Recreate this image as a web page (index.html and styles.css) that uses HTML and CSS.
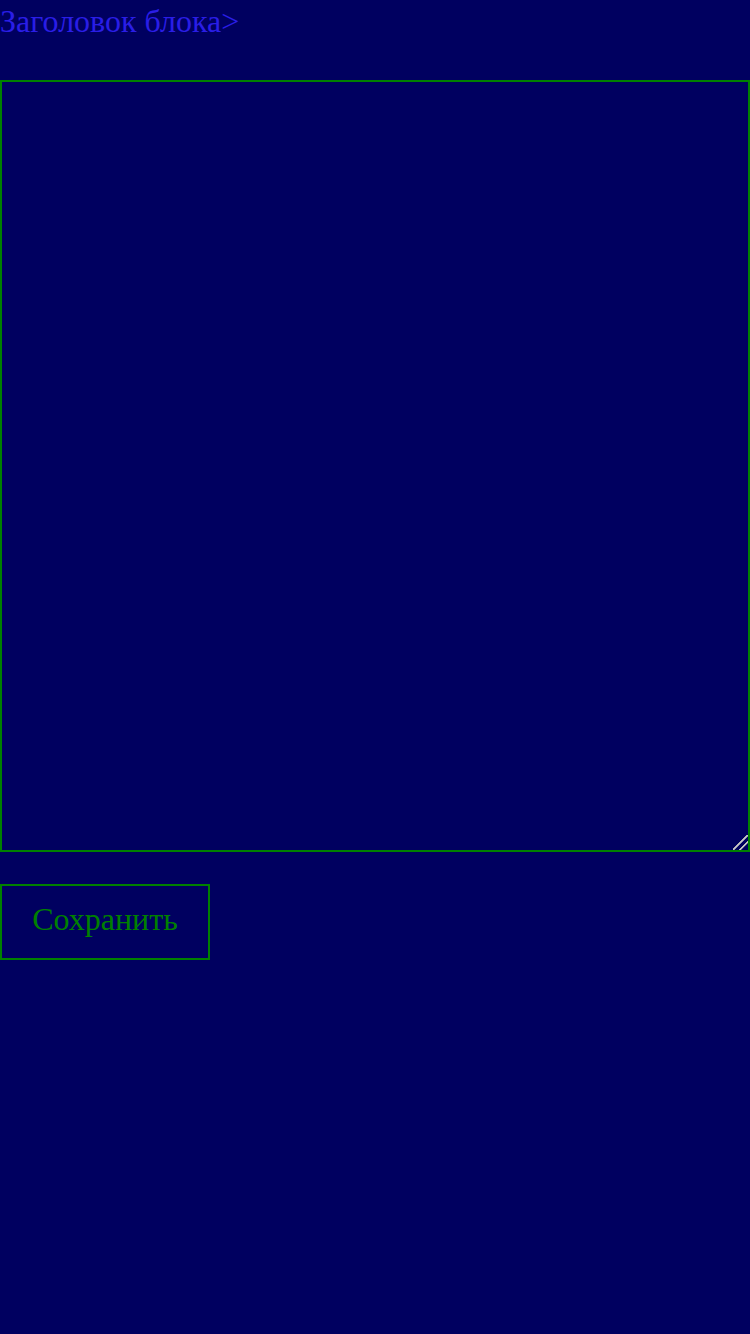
FILE: index.html
```html
<!DOCTYPE html>
<html lang="ru">
<head>
<meta charset="utf-8">
<link rel="stylesheet" href="styles.css">
</head>
<body>
<div class="block">
  <div class="block-title">Заголовок блока&gt;</div>
  <textarea class="block-text"></textarea>
  <button class="block-save" type="button">Сохранить</button>
</div>
</body>
</html>
```
FILE: styles.css
```css
html, body {
  margin: 0;
  padding: 0;
  background: #000060;
  height: 100%;
}
.block {
  display: flex;
  flex-direction: column;
  align-items: flex-start;
  font-family: "Liberation Serif", serif;
}
.block-title {
  font-size: 32px;
  line-height: 42px;
  color: #2a1ee6;
  height: 80px;
}
.block-text {
  box-sizing: border-box;
  width: 750px;
  height: 772px;
  margin: 0;
  background: #000060;
  border: 2px solid #008000;
  color: #008000;
  font-family: "Liberation Serif", serif;
  font-size: 32px;
  outline: none;
}
.block-text::-webkit-resizer {
  background: linear-gradient(135deg,
    transparent 0%, transparent 45%,
    #b0b0b0 46%, #d8d8d8 53%, transparent 54%,
    transparent 68%, #b0b0b0 69%, #d8d8d8 76%, transparent 77%);
}
.block-save {
  box-sizing: border-box;
  margin-top: 32px;
  height: 76px;
  width: 210px;
  padding: 0 30px 6px;
  background: #000060;
  border: 2px solid #008000;
  color: #008000;
  font-family: "Liberation Serif", serif;
  font-size: 32px;
  border-radius: 0;
}
```
